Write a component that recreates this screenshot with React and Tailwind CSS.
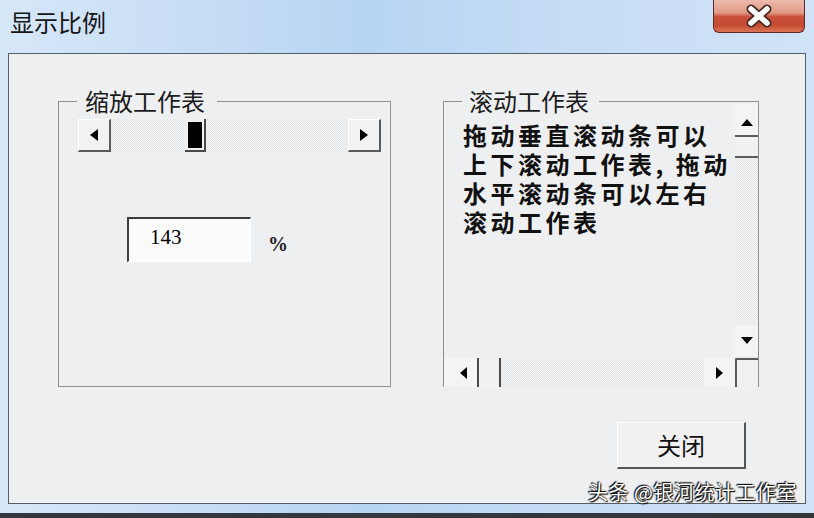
import React from 'react'

const cjk = "font-['Noto_Sans_CJK_SC','Noto_Sans',sans-serif]"
const track = 'bg-[conic-gradient(#e3e4e5_25%,#f6f6f6_0_50%,#e3e4e5_0_75%,#f6f6f6_0)] bg-[length:2px_2px]'

const Tri = ({ dir, w = 8, h = 12 }) => {
  const pts = {
    left: `${w},0 0,${h / 2} ${w},${h}`,
    right: `0,0 ${w},${h / 2} 0,${h}`,
    up: `0,${h} ${w / 2},0 ${w},${h}`,
    down: `0,0 ${w},0 ${w / 2},${h}`,
  }[dir]
  return (
    <svg width={w} height={h} viewBox={`0 0 ${w} ${h}`}>
      <polygon points={pts} fill="#000" />
    </svg>
  )
}

const RaisedButton = ({ dir, className = '' }) => (
  <div
    className={`h-full flex items-center justify-center bg-[#f2f2f2] border-t border-l border-t-white border-l-white border-r-2 border-b-2 border-r-[#5a5a5a] border-b-[#5a5a5a] ${className}`}
  >
    <Tri dir={dir} />
  </div>
)

const ZoomScrollbar = () => (
  <div className={`ml-[19px] mt-[5px] w-[303px] h-[33px] flex ${track}`}>
    <RaisedButton dir="left" className="w-[33px]" />
    <div className="ml-[74px] w-[21px] h-full p-[3px] pr-[2px] pb-[2px] bg-[#f0f0f0] border-r-2 border-b-2 border-[#4a4a4a]">
      <div className="w-full h-full bg-black" />
    </div>
    <div className="flex-1" />
    <RaisedButton dir="right" className="w-[33px]" />
  </div>
)

const VScroll = () => (
  <div className={`flex flex-col h-full ${track}`}>
    <div className="h-[31px] flex items-center justify-center bg-[#f4f4f4] pt-[6px]">
      <Tri dir="up" w={12} h={7} />
    </div>
    <div className="h-[23px] bg-[#f1f1f1] border-t-2 border-b-2 border-[#5c5c5c]" />
    <div className="flex-1" />
    <div className="h-[31px] flex items-center justify-center bg-[#f4f4f4] mb-[2px]">
      <Tri dir="down" w={12} h={7} />
    </div>
  </div>
)

const HScroll = () => (
  <div className={`flex h-full ${track}`}>
    <div className="w-[33px] flex items-center justify-center bg-[#f4f4f4] pl-[6px]">
      <Tri dir="left" w={7} h={12} />
    </div>
    <div className="w-[24px] bg-[#f1f1f1] border-l-2 border-r-2 border-[#4a4a4a]" />
    <div className="flex-1" />
    <div className="w-[30px] flex items-center justify-center bg-[#f4f4f4] mr-[1px]">
      <Tri dir="right" w={7} h={12} />
    </div>
  </div>
)

const GroupBox = ({ title, className = '', legendClass = '', children }) => (
  <fieldset className={`h-[299px] border border-[#8c9094] ${className}`}>
    <legend className={`ml-[18px] text-[24px] leading-[26px] text-[#1b1b1b] ${cjk} ${legendClass}`}>
      {title}
    </legend>
    {children}
  </fieldset>
)

const lines = ['拖动垂直滚动条可以', '上下滚动工作表, 拖动', '水平滚动条可以左右', '滚动工作表']

export default function App() {
  return (
    <div className="relative w-[814px] h-[518px] overflow-hidden bg-[#34383e]">
      <div className="h-[513px] flex flex-col bg-[linear-gradient(90deg,#d6e7f8_0%,#c3dbf4_30%,#b7d4f3_45%,#c6ddf5_70%,#d0e3f7_100%)]">
        <div className="h-[53px] flex justify-between items-start">
          <div className={`pl-[10px] pt-[6px] text-[24px] leading-[32px] text-[#161616] ${cjk}`}>显示比例</div>
          <div className="mr-[9px] w-[92px] h-[33px] flex items-center justify-center rounded-b-[6px] border border-t-0 border-[#5e2a22] bg-[linear-gradient(#ecb9ac_0%,#e29a88_40%,#c9513a_52%,#c44a31_78%,#dc7455_100%)]">
            <svg width="32" height="24" viewBox="0 0 32 24">
              <path d="M8 5 L24 19 M24 5 L8 19" stroke="#4a2a26" strokeWidth="9" strokeLinecap="round" />
              <path d="M8 5 L24 19 M24 5 L8 19" stroke="#ffffff" strokeWidth="5.5" strokeLinecap="round" />
            </svg>
          </div>
        </div>

        <div className="mx-[8px] h-[451px] border border-[#56606c] bg-[#eeeff0] flex flex-col">
          <div className="flex mt-[34px] ml-[49px]">
            <GroupBox title="缩放工作表" className="w-[333px]" legendClass="pl-[8px] pr-[12px]">
              <ZoomScrollbar />
              <div className="flex items-center mt-[65px] ml-[68px]">
                <div className="w-[124px] h-[45px] bg-[#fbfbfb] border-t-2 border-l-2 border-t-[#3e3e3e] border-l-[#3e3e3e] border-b border-r border-b-white border-r-white pl-[21px] pt-[6px] text-[21px] leading-[24px] text-black font-['Liberation_Serif',serif]">
                  143
                </div>
                <div className="ml-[17px] mt-[8px] text-[20px] font-bold text-[#222] font-['Liberation_Serif',serif]">%</div>
              </div>
            </GroupBox>

            <GroupBox title="滚动工作表" className="ml-[52px] w-[316px]" legendClass="pl-[7px] pr-[10px]">
              <div className="-mt-[10px] h-[283px] grid grid-cols-[1fr_23px] grid-rows-[1fr_29px]">
                <div className={`pl-[19px] pt-[16px] text-[24px] leading-[29px] font-bold tracking-[3.5px] text-[#111] whitespace-nowrap ${cjk}`}>
                  {lines.map((l) => (
                    <div key={l}>{l}</div>
                  ))}
                </div>
                <VScroll />
                <HScroll />
                <div className="bg-[#f0f0f0] border-l-2 border-t-2 border-[#5a5a5a] rounded-tl-[2px]" />
              </div>
            </GroupBox>
          </div>

          <div className="flex justify-end mt-[35px] mr-[59px]">
            <div className={`w-[129px] h-[47px] flex items-center justify-center bg-[#f1f1f1] border-t border-l border-t-white border-l-white border-r-2 border-b-2 border-r-[#555] border-b-[#555] text-[24px] text-[#111] ${cjk}`}>
              关闭
            </div>
          </div>
        </div>
      </div>

      <div className={`absolute left-[588px] top-[478px] text-[20px] leading-[28px] text-white tracking-[0.5px] [text-shadow:0_0_2px_#000,1px_1px_1px_#000,-1px_-1px_1px_#000] ${cjk}`}>
        头条 @银河统计工作室
      </div>
    </div>
  )
}
